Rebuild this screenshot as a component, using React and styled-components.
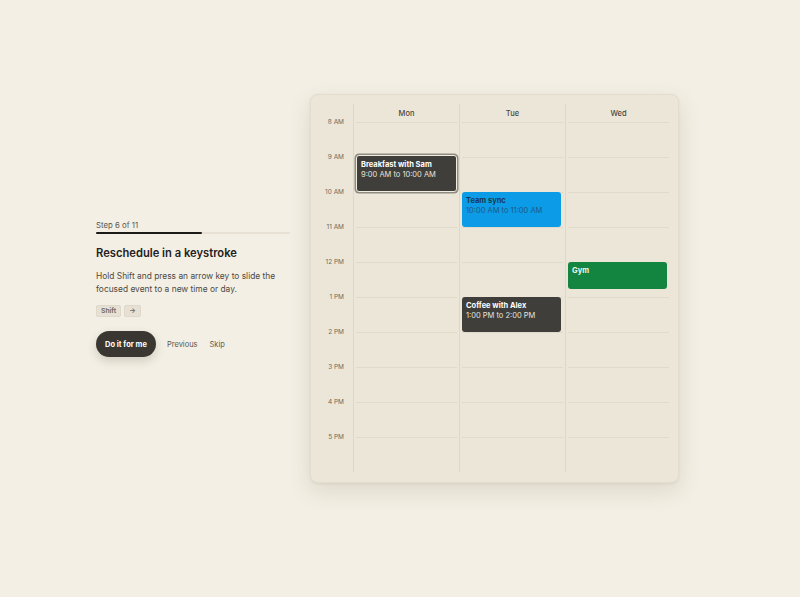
import React from "react";
import styled, { createGlobalStyle } from "styled-components";

const HOUR = 35;
const START = 8;
const hours = [8, 9, 10, 11, 12, 13, 14, 15, 16, 17];
const days = ["Mon", "Tue", "Wed"];

const events = [
  { day: 0, start: 9, end: 10, title: "Breakfast with Sam", time: "9:00 AM to 10:00 AM", tone: "dark", focused: true },
  { day: 1, start: 10, end: 11, title: "Team sync", time: "10:00 AM to 11:00 AM", tone: "blue" },
  { day: 2, start: 12, end: 12.78, title: "Gym", tone: "green" },
  { day: 1, start: 13, end: 14, title: "Coffee with Alex", time: "1:00 PM to 2:00 PM", tone: "dark" },
];

const tones = {
  dark: { bg: "#403e3a", title: "#ffffff", time: "#e6e3dc" },
  blue: { bg: "#0c9be6", title: "#163a55", time: "#1f5a86" },
  green: { bg: "#148441", title: "#f1f4ee", time: "#dfeee2" },
};

const label = (h) => (h < 12 ? `${h} AM` : h === 12 ? "12 PM" : `${h - 12} PM`);

const GlobalStyle = createGlobalStyle`
  html, body {
    margin: 0;
    padding: 0;
    background: #f3efe4;
    font-family: "Inter", "Liberation Sans", sans-serif;
  }
`;

const Page = styled.div`
  width: 800px;
  height: 597px;
  display: flex;
  align-items: center;
  gap: 20px;
  padding: 0 0 20px 96px;
  box-sizing: border-box;
`;

const Intro = styled.div`
  width: 194px;
  display: flex;
  flex-direction: column;
`;

const StepText = styled.div`
  font-size: 7.8px;
  color: #5a574f;
`;

const Track = styled.div`
  margin-top: 2px;
  height: 2px;
  background: #e6e1d4;
  border-radius: 1px;
`;

const Fill = styled.div`
  height: 100%;
  background: #1d1b18;
  border-radius: 1px;
`;

const Title = styled.h2`
  margin: 12px 0 0;
  font-size: 11.2px;
  font-weight: 600;
  color: #23211d;
`;

const Desc = styled.p`
  margin: 10px 0 0;
  font-size: 8.4px;
  line-height: 13px;
  color: #4d4a43;
`;

const Keys = styled.div`
  display: flex;
  gap: 3px;
  margin-top: 9px;
`;

const Kbd = styled.span`
  font-size: 6.8px;
  font-weight: 600;
  color: #6c685f;
  background: #e6e1d4;
  border: 1px solid #ddd8ca;
  border-radius: 2px;
  padding: 1px 4px;
  line-height: 8px;
`;

const Actions = styled.div`
  display: flex;
  align-items: center;
  gap: 10px;
  margin-top: 14px;
`;

const Primary = styled.button`
  border: none;
  background: #3a3732;
  color: #fff;
  font-family: inherit;
  font-size: 7.5px;
  font-weight: 700;
  height: 26px;
  padding: 0 9px;
  border-radius: 13px;
  box-shadow: 0 4px 10px rgba(60, 50, 30, 0.18);
`;

const Ghost = styled.button`
  border: none;
  background: none;
  font-family: inherit;
  font-size: 7.5px;
  color: #5a574f;
  padding: 0 1px;
`;

const Card = styled.div`
  width: 369px;
  box-sizing: border-box;
  background: #ebe6d8;
  border: 1px solid #e2ddcf;
  border-radius: 8px;
  box-shadow: 0 8px 22px rgba(90, 80, 50, 0.14), 0 1px 3px rgba(90, 80, 50, 0.08);
  padding: 9px 8px 10px 0;
  display: grid;
  grid-template-columns: 42px repeat(3, 106px);
`;

const TimeCol = styled.div`
  display: flex;
  flex-direction: column;
  padding-top: 18px;
`;

const TimeLabel = styled.div`
  height: ${HOUR}px;
  font-size: 6.5px;
  color: #6e6a60;
  text-align: right;
  padding-right: 9px;
  transform: translateY(-4px);
`;

const DayCol = styled.div`
  border-left: 1px solid #ddd7c6;
  display: flex;
  flex-direction: column;
`;

const DayHead = styled.div`
  height: 18px;
  font-size: 7.5px;
  font-weight: 500;
  color: #4a463e;
  text-align: center;
  line-height: 20px;
`;

const Body = styled.div`
  position: relative;
`;

const HourCell = styled.div`
  height: ${HOUR}px;
  box-sizing: border-box;
  border-top: 1px solid #e0dacb;
  margin: 0 2px;
`;

const Event = styled.div`
  position: absolute;
  left: 2px;
  right: 4px;
  box-sizing: border-box;
  background: ${(p) => tones[p.$tone].bg};
  border-radius: 3px;
  padding: 4px 4px;
  ${(p) =>
    p.$focused &&
    `border: 1px solid #f1ece0; box-shadow: 0 0 0 1.5px #8f8b81; left: 2px; right: 2px;`}
`;

const EvTitle = styled.div`
  font-size: 7.5px;
  font-weight: 700;
  color: ${(p) => tones[p.$tone].title};
  line-height: 10px;
`;

const EvTime = styled.div`
  font-size: 7.5px;
  color: ${(p) => tones[p.$tone].time};
  line-height: 10px;
`;

export default function App() {
  return (
    <>
      <GlobalStyle />
      <Page>
        <Intro>
          <StepText>Step 6 of 11</StepText>
          <Track>
            <Fill style={{ width: `${(6 / 11) * 100}%` }} />
          </Track>
          <Title>Reschedule in a keystroke</Title>
          <Desc>
            Hold Shift and press an arrow key to slide the focused event to a new time or day.
          </Desc>
          <Keys>
            <Kbd>Shift</Kbd>
            <Kbd>→</Kbd>
          </Keys>
          <Actions>
            <Primary>Do it for me</Primary>
            <Ghost>Previous</Ghost>
            <Ghost>Skip</Ghost>
          </Actions>
        </Intro>
        <Card>
          <TimeCol>
            {hours.map((h) => (
              <TimeLabel key={h}>{label(h)}</TimeLabel>
            ))}
          </TimeCol>
          {days.map((d, di) => (
            <DayCol key={d}>
              <DayHead>{d}</DayHead>
              <Body>
                {hours.map((h) => (
                  <HourCell key={h} />
                ))}
                {events
                  .filter((e) => e.day === di)
                  .map((e) => (
                    <Event
                      key={e.title}
                      $tone={e.tone}
                      $focused={e.focused}
                      style={{
                        top: (e.start - START) * HOUR - (e.focused ? 2 : 0),
                        height: (e.end - e.start) * HOUR + (e.focused ? 2 : 0),
                      }}
                    >
                      <EvTitle $tone={e.tone}>{e.title}</EvTitle>
                      {e.time && <EvTime $tone={e.tone}>{e.time}</EvTime>}
                    </Event>
                  ))}
              </Body>
            </DayCol>
          ))}
        </Card>
      </Page>
    </>
  );
}
